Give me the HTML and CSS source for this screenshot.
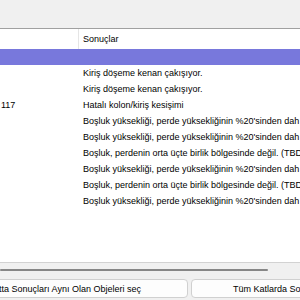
FILE: index.html
```html
<!DOCTYPE html>
<html lang="tr">
<head>
    <meta charset="UTF-8">
    <meta name="viewport" content="width=device-width, initial-scale=1.0">
    <link rel="stylesheet" href="styles.css">
</head>
<body>

<!-- Toolbar strip -->
<div class="toolbar"></div>

<!-- Results list -->
<div class="list">
    <div class="list-header">
        <div class="col-a"></div>
        <div class="col-b">Sonuçlar</div>
    </div>
    <div class="rows">
        <div class="row selected"><span class="col-a"></span><span class="col-b"></span></div>
        <div class="row"><span class="col-a"></span><span class="col-b">Kiriş döşeme kenan çakışıyor.</span></div>
        <div class="row"><span class="col-a"></span><span class="col-b">Kiriş döşeme kenan çakışıyor.</span></div>
        <div class="row"><span class="col-a">117</span><span class="col-b">Hatalı kolon/kiriş kesişimi</span></div>
        <div class="row"><span class="col-a"></span><span class="col-b">Boşluk yüksekliği, perde yüksekliğinin %20'sinden dah</span></div>
        <div class="row"><span class="col-a"></span><span class="col-b">Boşluk yüksekliği, perde yüksekliğinin %20'sinden dah</span></div>
        <div class="row"><span class="col-a"></span><span class="col-b">Boşluk, perdenin orta üçte birlik bölgesinde değil. (TBD</span></div>
        <div class="row"><span class="col-a"></span><span class="col-b">Boşluk yüksekliği, perde yüksekliğinin %20'sinden dah</span></div>
        <div class="row"><span class="col-a"></span><span class="col-b">Boşluk, perdenin orta üçte birlik bölgesinde değil. (TBD</span></div>
        <div class="row"><span class="col-a"></span><span class="col-b">Boşluk yüksekliği, perde yüksekliğinin %20'sinden dah</span></div>
    </div>
    <div class="hscroll"><div class="thumb"></div></div>
</div>

<!-- Bottom buttons -->
<div class="buttons">
    <button class="btn btn-left" type="button">tta Sonuçları Aynı Olan Objeleri seç</button>
    <button class="btn btn-right" type="button">Tüm Katlarda Son</button>
</div>

</body>
</html>
```

FILE: styles.css
```css
html, body {
    margin: 0;
    padding: 0;
}

body {
    width: 300px;
    height: 300px;
    overflow: hidden;
    background: #f0f0f0;
    font-family: "Liberation Sans", Arial, sans-serif;
    font-size: 9px;
    color: #000;
    display: flex;
    flex-direction: column;
}

.toolbar {
    height: 28px;
    background: #f0f0f0;
}

.list {
    height: 245px;
    border-top: 1px solid #a0a0a0;
    background: #fff;
    display: flex;
    flex-direction: column;
}

.list-header {
    height: 20px;
    display: flex;
    align-items: center;
}

.list-header .col-a {
    height: 100%;
    border-right: 1px solid #e5e5e5;
}

.col-a {
    width: 79px;
    flex: none;
    padding-left: 1px;
    box-sizing: border-box;
}

.col-b {
    padding-left: 4px;
    white-space: nowrap;
}

.rows {
    flex: 1;
    overflow: hidden;
}

.row {
    height: 16px;
    display: flex;
    align-items: center;
    white-space: nowrap;
    overflow: hidden;
}

.row .col-b {
    padding-left: 4px;
}

.row.selected {
    background: #7878dc;
}

.hscroll {
    height: 11px;
    border-top: 1px solid #d2d2d2;
    background: #f0f0f0;
    position: relative;
}

.hscroll .thumb {
    position: absolute;
    left: 0;
    top: 6px;
    width: 268px;
    height: 2px;
    border-radius: 1px;
    background: #868686;
}

.buttons {
    display: flex;
    gap: 3px;
    padding-top: 5px;
}

.btn {
    height: 19px;
    border: 1px solid #d0d0d0;
    border-radius: 4px;
    background: #fdfdfd;
    font-family: "Liberation Sans", Arial, sans-serif;
    font-size: 9px;
    color: #000;
    white-space: nowrap;
    overflow: hidden;
    padding: 0;
    flex: none;
    display: flex;
    align-items: center;
}

.btn-left {
    width: 198px;
    margin-left: -10px;
    justify-content: flex-end;
    padding-right: 46px;
}

.btn-right {
    width: 200px;
    justify-content: flex-start;
    padding-left: 41px;
}
```
